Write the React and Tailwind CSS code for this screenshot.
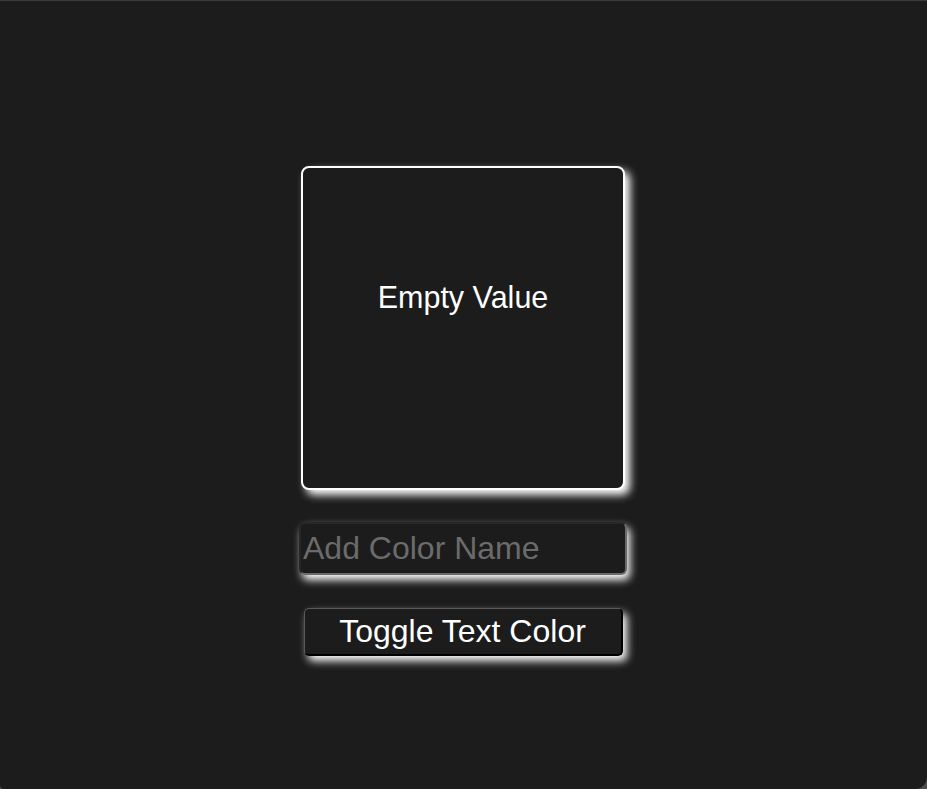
export default function App() {
  return (
    <div className="w-[927px] h-[789px] bg-[#4d4d4d]" style={{ fontFamily: '"Liberation Sans", Arial, sans-serif' }}>
      <div className="h-[789px] bg-[#1b1c1b] border-t border-[#3b3b3b] rounded-br-[12px] rounded-bl-[4px] flex flex-col items-center pt-[165px] pr-[1px]">
        <div className="w-[324px] h-[324px] border-2 border-white rounded-[8px] bg-[#1b1c1b] shadow-[5px_5px_8px_#ffffff] flex justify-center pt-[111px]">
          <span className="text-[30.5px] leading-[36px] text-white">Empty Value</span>
        </div>
        <input
          placeholder="Add Color Name"
          className="mt-[32px] w-[328px] h-[53px] rounded-[6px] bg-[#1b1c1b] border-2 border-[#262726] border-b-[#6a6a6a] border-r-[#6a6a6a] shadow-[3px_5px_8px_#ffffff] px-[2px] text-[32px] text-white placeholder:text-[#6b6b6b] outline-none"
        />
        <button className="mt-[33px] w-[319px] h-[48px] rounded-[5px] bg-[#1b1c1b] border border-[#5a5a5a] border-b-black border-r-black border-b-2 border-r-2 shadow-[4px_5px_8px_#ffffff] text-[32px] leading-none text-white pb-[1px]">
          Toggle Text Color
        </button>
      </div>
    </div>
  );
}
